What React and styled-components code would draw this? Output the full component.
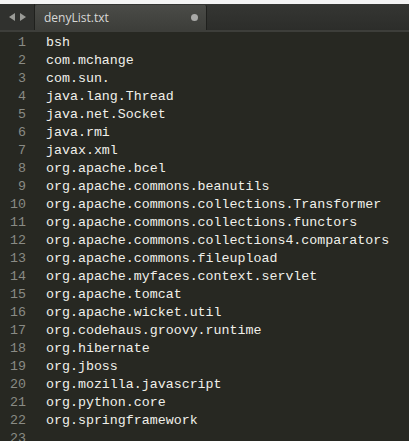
import React from "react";
import styled, { createGlobalStyle } from "styled-components";

const Global = createGlobalStyle`
  html, body { margin: 0; padding: 0; background: #272822; overflow: hidden; }
`;

const Window = styled.div`
  width: 409px;
  height: 441px;
  display: flex;
  flex-direction: column;
  background: #272822;
  overflow: hidden;
`;

const TopStrip = styled.div`
  flex-shrink: 0;
  height: 4px;
  background: #f4f4f4;
`;

// Tab bar
const TabBar = styled.div`
  flex-shrink: 0;
  height: 26px;
  display: flex;
  align-items: stretch;
  background: linear-gradient(#353633, #2c2d2a);
  border-bottom: 2px solid #3d3e3a;
`;

const Arrows = styled.div`
  width: 34px;
  display: flex;
  align-items: center;
  justify-content: center;
  gap: 5px;
  border-right: 1px solid #1f201d;
  background: #30312e;
`;

const Tab = styled.div`
  width: 172px;
  margin-top: 1px;
  display: flex;
  align-items: center;
  justify-content: space-between;
  padding: 0 8px 0 9px;
  box-sizing: border-box;
  background: linear-gradient(#4a4b47, #3d3e3a);
  border-right: 1px solid #1f201d;
  border-radius: 2px 2px 0 0;
`;

const TabTitle = styled.span`
  font-family: "Open Sans", "DejaVu Sans", sans-serif;
  font-size: 12px;
  color: #d8d8d6;
`;

const Dot = styled.span`
  width: 7px;
  height: 7px;
  border-radius: 50%;
  background: #a9a9a7;
`;

// Editor
const Editor = styled.div`
  flex: 1;
  min-height: 0;
  overflow: hidden;
  padding-top: 2px;
  font-family: "Liberation Mono", "DejaVu Sans Mono", monospace;
  font-size: 13.3px;
`;

const Row = styled.div`
  display: flex;
  height: 18px;
  line-height: 18px;
  white-space: pre;
`;

const Num = styled.span`
  width: 26px;
  text-align: right;
  color: #8a8b85;
`;

const Code = styled.span`
  margin-left: 20px;
  color: #f0f0ea;
`;

const lines = [
  "bsh",
  "com.mchange",
  "com.sun.",
  "java.lang.Thread",
  "java.net.Socket",
  "java.rmi",
  "javax.xml",
  "org.apache.bcel",
  "org.apache.commons.beanutils",
  "org.apache.commons.collections.Transformer",
  "org.apache.commons.collections.functors",
  "org.apache.commons.collections4.comparators",
  "org.apache.commons.fileupload",
  "org.apache.myfaces.context.servlet",
  "org.apache.tomcat",
  "org.apache.wicket.util",
  "org.codehaus.groovy.runtime",
  "org.hibernate",
  "org.jboss",
  "org.mozilla.javascript",
  "org.python.core",
  "org.springframework",
  "",
];

const Arrow = ({ dir }) => (
  <svg width="6" height="8" viewBox="0 0 6 8">
    <path d={dir === "left" ? "M6 0 L0 4 L6 8 Z" : "M0 0 L6 4 L0 8 Z"} fill="#9a9b97" />
  </svg>
);

export default function App() {
  return (
    <Window>
      <Global />
      <TopStrip />
      <TabBar>
        <Arrows>
          <Arrow dir="left" />
          <Arrow dir="right" />
        </Arrows>
        <Tab>
          <TabTitle>denyList.txt</TabTitle>
          <Dot />
        </Tab>
      </TabBar>
      <Editor>
        {lines.map((l, i) => (
          <Row key={i}>
            <Num>{i + 1}</Num>
            <Code>{l}</Code>
          </Row>
        ))}
      </Editor>
    </Window>
  );
}
